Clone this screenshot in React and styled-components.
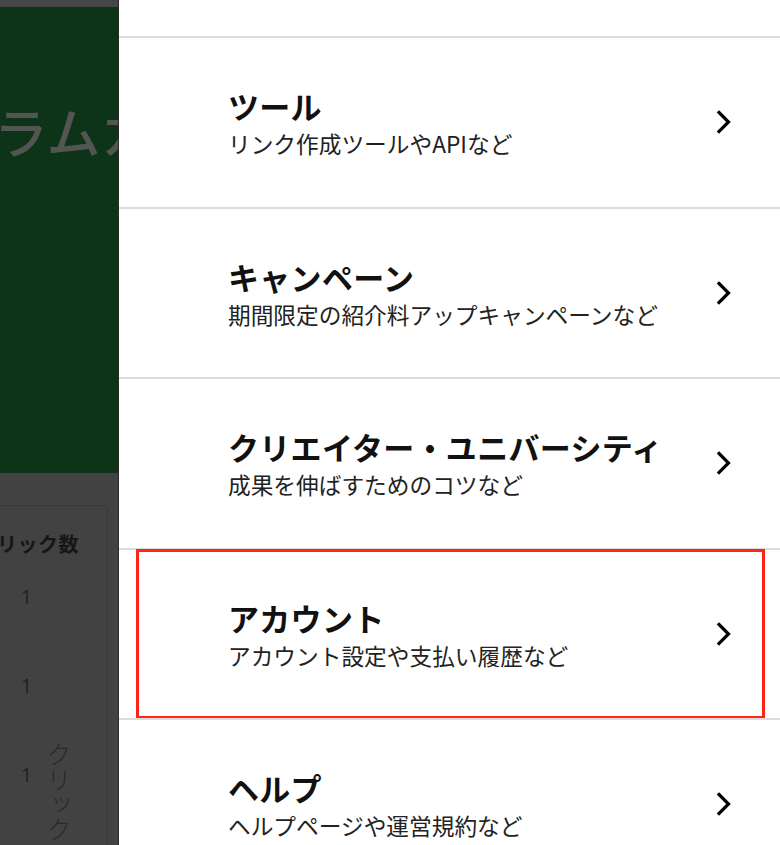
import React from 'react';
import styled, { createGlobalStyle } from 'styled-components';

const Global = createGlobalStyle`
  html, body { margin: 0; padding: 0; background: #ffffff; }
  body { font-family: "Noto Sans CJK JP", "Noto Sans", sans-serif; }
`;

const Screen = styled.div`
  display: flex;
  width: 780px;
  height: 845px;
  overflow: hidden;
`;

const Backdrop = styled.div`
  width: 118px;
  flex-shrink: 0;
  display: flex;
  flex-direction: column;
  background: #424242;
  overflow: hidden;
`;

const TopStrip = styled.div`
  height: 7px;
  flex-shrink: 0;
  background: #464646;
`;

const Hero = styled.div`
  height: 466px;
  flex-shrink: 0;
  background: #0d3318;
  padding-top: 88px;
  box-sizing: border-box;
  overflow: hidden;
`;

const HeroText = styled.div`
  white-space: nowrap;
  font-size: 54px;
  font-weight: 500;
  letter-spacing: 0;
  margin-left: -6px;
  color: #525552;
  line-height: 72px;
`;

const Lower = styled.div`
  flex: 1;
  padding-top: 32px;
`;

const StatsCard = styled.div`
  width: 112px;
  margin-left: -6px;
  height: 400px;
  border: 1px solid #393939;
  border-radius: 4px;
  background: #424242;
`;

const StatsHead = styled.div`
  font-size: 20px;
  font-weight: 700;
  color: #161616;
  white-space: nowrap;
  margin-left: 2px;
  margin-top: 23px;
  letter-spacing: 0.5px;
`;

const StatsCol = styled.div`
  display: flex;
`;

const Numbers = styled.div`
  display: flex;
  flex-direction: column;
  width: 46px;
  padding-top: 3px;
`;

const Num = styled.div`
  height: 89px;
  padding-left: 26px;
  font-size: 19px;
  color: #222;
  font-family: "Noto Sans", sans-serif;
  line-height: 72px;
`;

const Vertical = styled.div`
  writing-mode: vertical-rl;
  font-size: 25px;
  color: #2a2a2a;
  font-weight: 300;
  margin-top: 184px;
`;

const Drawer = styled.div`
  flex: 1;
  background: #fff;
  border-left: 1px solid #2a2a2a;
  display: flex;
  flex-direction: column;
  padding-top: 36px;
`;

const Row = styled.div`
  height: 170.5px;
  box-sizing: border-box;
  border-top: 2px solid #dcdcdc;
  flex-shrink: 0;
  display: flex;
  align-items: center;
  padding-left: 109px;
  padding-right: 48px;
  position: relative;
`;

const Highlight = styled.div`
  position: absolute;
  left: 17px;
  right: 15px;
  top: -1px;
  bottom: -1px;
  border: 3px solid #ff2414;
  pointer-events: none;
`;

const Texts = styled.div`
  flex: 1;
  display: flex;
  flex-direction: column;
  gap: 1px;
  padding-top: 1px;
`;

const Title = styled.div`
  font-size: 31px;
  font-weight: 700;
  color: #111;
  line-height: 42px;
  letter-spacing: 0.3px;
  white-space: nowrap;
`;

const Sub = styled.div`
  font-size: 22.7px;
  color: #222;
  line-height: 32px;
  white-space: nowrap;
`;

const Chevron = () => (
  <svg width="16" height="24" viewBox="0 0 16 24" fill="none">
    <path d="M3 2.5 L12.5 12 L3 21.5" stroke="#000" strokeWidth="3.2" strokeLinecap="square" />
  </svg>
);

const items = [
  { title: 'ツール', sub: 'リンク作成ツールやAPIなど' },
  { title: 'キャンペーン', sub: '期間限定の紹介料アップキャンペーンなど' },
  { title: 'クリエイター・ユニバーシティ', sub: '成果を伸ばすためのコツなど' },
  { title: 'アカウント', sub: 'アカウント設定や支払い履歴など', marked: true },
  { title: 'ヘルプ', sub: 'ヘルプページや運営規約など' },
];

export default function App() {
  return (
    <Screen>
      <Global />
      <Backdrop>
        <TopStrip />
        <Hero>
          <HeroText>ラムカ</HeroText>
        </Hero>
        <Lower>
          <StatsCard>
            <StatsHead>リック数</StatsHead>
            <StatsCol>
              <Numbers>
                <Num>1</Num>
                <Num>1</Num>
                <Num>1</Num>
              </Numbers>
              <Vertical>クリック</Vertical>
            </StatsCol>
          </StatsCard>
        </Lower>
      </Backdrop>
      <Drawer>
        {items.map((it) => (
          <Row key={it.title}>
            {it.marked && <Highlight />}
            <Texts>
              <Title>{it.title}</Title>
              <Sub>{it.sub}</Sub>
            </Texts>
            <Chevron />
          </Row>
        ))}
      </Drawer>
    </Screen>
  );
}
